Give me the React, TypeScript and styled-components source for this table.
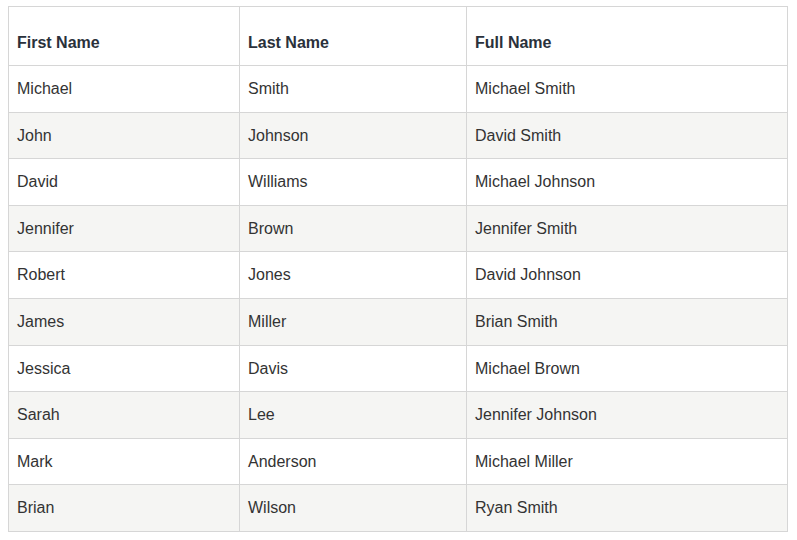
import styled, { createGlobalStyle } from "styled-components";

const GlobalStyle = createGlobalStyle`
  body {
    margin: 0;
    background: #ffffff;
    font-family: "Liberation Sans", Arial, sans-serif;
  }
`;

const Page = styled.div`
  padding: 6px 9px 0 8px;
`;

const Table = styled.table`
  width: 100%;
  table-layout: fixed;
  border-collapse: collapse;
  font-size: 16px;
  color: #333333;
`;

const HeadCell = styled.th<{ $width?: number }>`
  width: ${(p) => (p.$width ? `${p.$width}px` : "auto")};
  box-sizing: border-box;
  padding: 27px 8px 13px;
  border: 1px solid #d6d6d6;
  text-align: left;
  font-weight: bold;
  color: #2a313b;
  line-height: 18px;
`;

const Row = styled.tr<{ $striped: boolean }>`
  background: ${(p) => (p.$striped ? "#f5f5f3" : "#ffffff")};
`;

const Cell = styled.td`
  padding: 14px 8px 13.6px;
  border: 1px solid #d6d6d6;
  line-height: 18px;
`;

const people = [
  ["Michael", "Smith", "Michael Smith"],
  ["John", "Johnson", "David Smith"],
  ["David", "Williams", "Michael Johnson"],
  ["Jennifer", "Brown", "Jennifer Smith"],
  ["Robert", "Jones", "David Johnson"],
  ["James", "Miller", "Brian Smith"],
  ["Jessica", "Davis", "Michael Brown"],
  ["Sarah", "Lee", "Jennifer Johnson"],
  ["Mark", "Anderson", "Michael Miller"],
  ["Brian", "Wilson", "Ryan Smith"],
];

export default function App() {
  return (
    <>
      <GlobalStyle />
      <Page>
        <Table>
          <thead>
            <tr>
              <HeadCell $width={231}>First Name</HeadCell>
              <HeadCell $width={227}>Last Name</HeadCell>
              <HeadCell>Full Name</HeadCell>
            </tr>
          </thead>
          <tbody>
            {people.map((p, i) => (
              <Row key={i} $striped={i % 2 === 1}>
                <Cell>{p[0]}</Cell>
                <Cell>{p[1]}</Cell>
                <Cell>{p[2]}</Cell>
              </Row>
            ))}
          </tbody>
        </Table>
      </Page>
    </>
  );
}
